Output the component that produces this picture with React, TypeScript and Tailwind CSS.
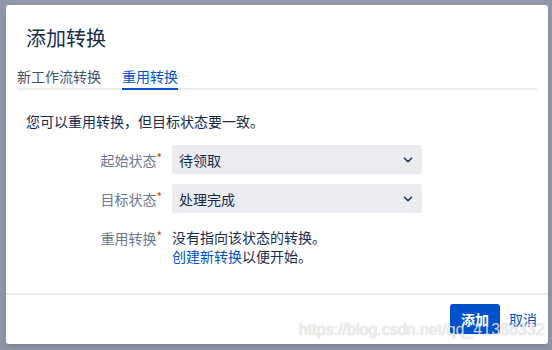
import { ChevronDown } from "lucide-react";

const fields = [
  { label: "起始状态", value: "待领取" },
  { label: "目标状态", value: "处理完成" },
];

function Label({ text }: { text: string }) {
  return (
    <div className="w-[137px] shrink-0 text-right text-[#6b778c] pr-[1px]">
      {text}
      <span className="text-[#de350b] text-[12px] align-top leading-[16px]">*</span>
    </div>
  );
}

function SelectBox({ value }: { value: string }) {
  return (
    <div className="w-[250px] h-[29px] rounded-[3px] bg-[#ebecf0] flex items-center justify-between pl-[7px] pr-[7px] text-[#172b4d]">
      <span>{value}</span>
      <ChevronDown size={14} strokeWidth={3} className="text-[#253858]" />
    </div>
  );
}

export default function App() {
  return (
    <div className="w-[552px] h-[350px] bg-[#8f97a6] pt-[5px] pl-[6px] relative font-['Noto_Sans_CJK_SC','Noto_Sans',sans-serif] text-[14px] leading-[20px]">
      <div className="w-[542px] h-[339px] bg-white rounded-[3px] shadow-md flex flex-col">
        <h1 className="pt-[19px] px-[20px] text-[20px] leading-[28px] text-[#172b4d]">添加转换</h1>

        <div className="mt-[14px] mx-[11px] flex gap-[21px] border-b-2 border-[#ebecf0] text-[#42526e]">
          <div className="pb-[2px]">新工作流转换</div>
          <div className="pb-[2px] -mb-[2px] border-b-2 border-[#0052cc] text-[#0052cc]">重用转换</div>
        </div>

        <p className="mt-[21px] px-[20px] text-[#172b4d]">您可以重用转换，但目标状态要一致。</p>

        <div className="mt-[14px] px-[20px] flex flex-col gap-[10px]">
          {fields.map((f) => (
            <div key={f.label} className="flex items-center gap-[9px]">
              <Label text={f.label} />
              <SelectBox value={f.value} />
            </div>
          ))}
          <div className="mt-[5px] flex items-start gap-[9px]">
            <Label text="重用转换" />
            <div className="text-[#172b4d] leading-[19px]">
              <div>没有指向该状态的转换。</div>
              <div>
                <span className="text-[#0052cc]">创建新转换</span>以便开始。
              </div>
            </div>
          </div>
        </div>

        <div className="mt-auto border-t-2 border-[#ebecf0] h-[51px] flex items-start justify-end gap-[9px] pt-[9px] pr-[11px]">
          <button className="w-[50px] h-[30px] rounded-[3px] bg-[#0052cc] text-white font-bold">添加</button>
          <button className="h-[30px] text-[#0052cc]">取消</button>
        </div>
      </div>

      <div className="absolute left-[299px] top-[320px] font-['Liberation_Sans',sans-serif] text-[16px] leading-[20px] text-white/80 [text-shadow:0_0_1px_rgba(0,0,0,0.35)] pointer-events-none">
        https://blog.csdn.net/qq_41386332
      </div>
    </div>
  );
}
